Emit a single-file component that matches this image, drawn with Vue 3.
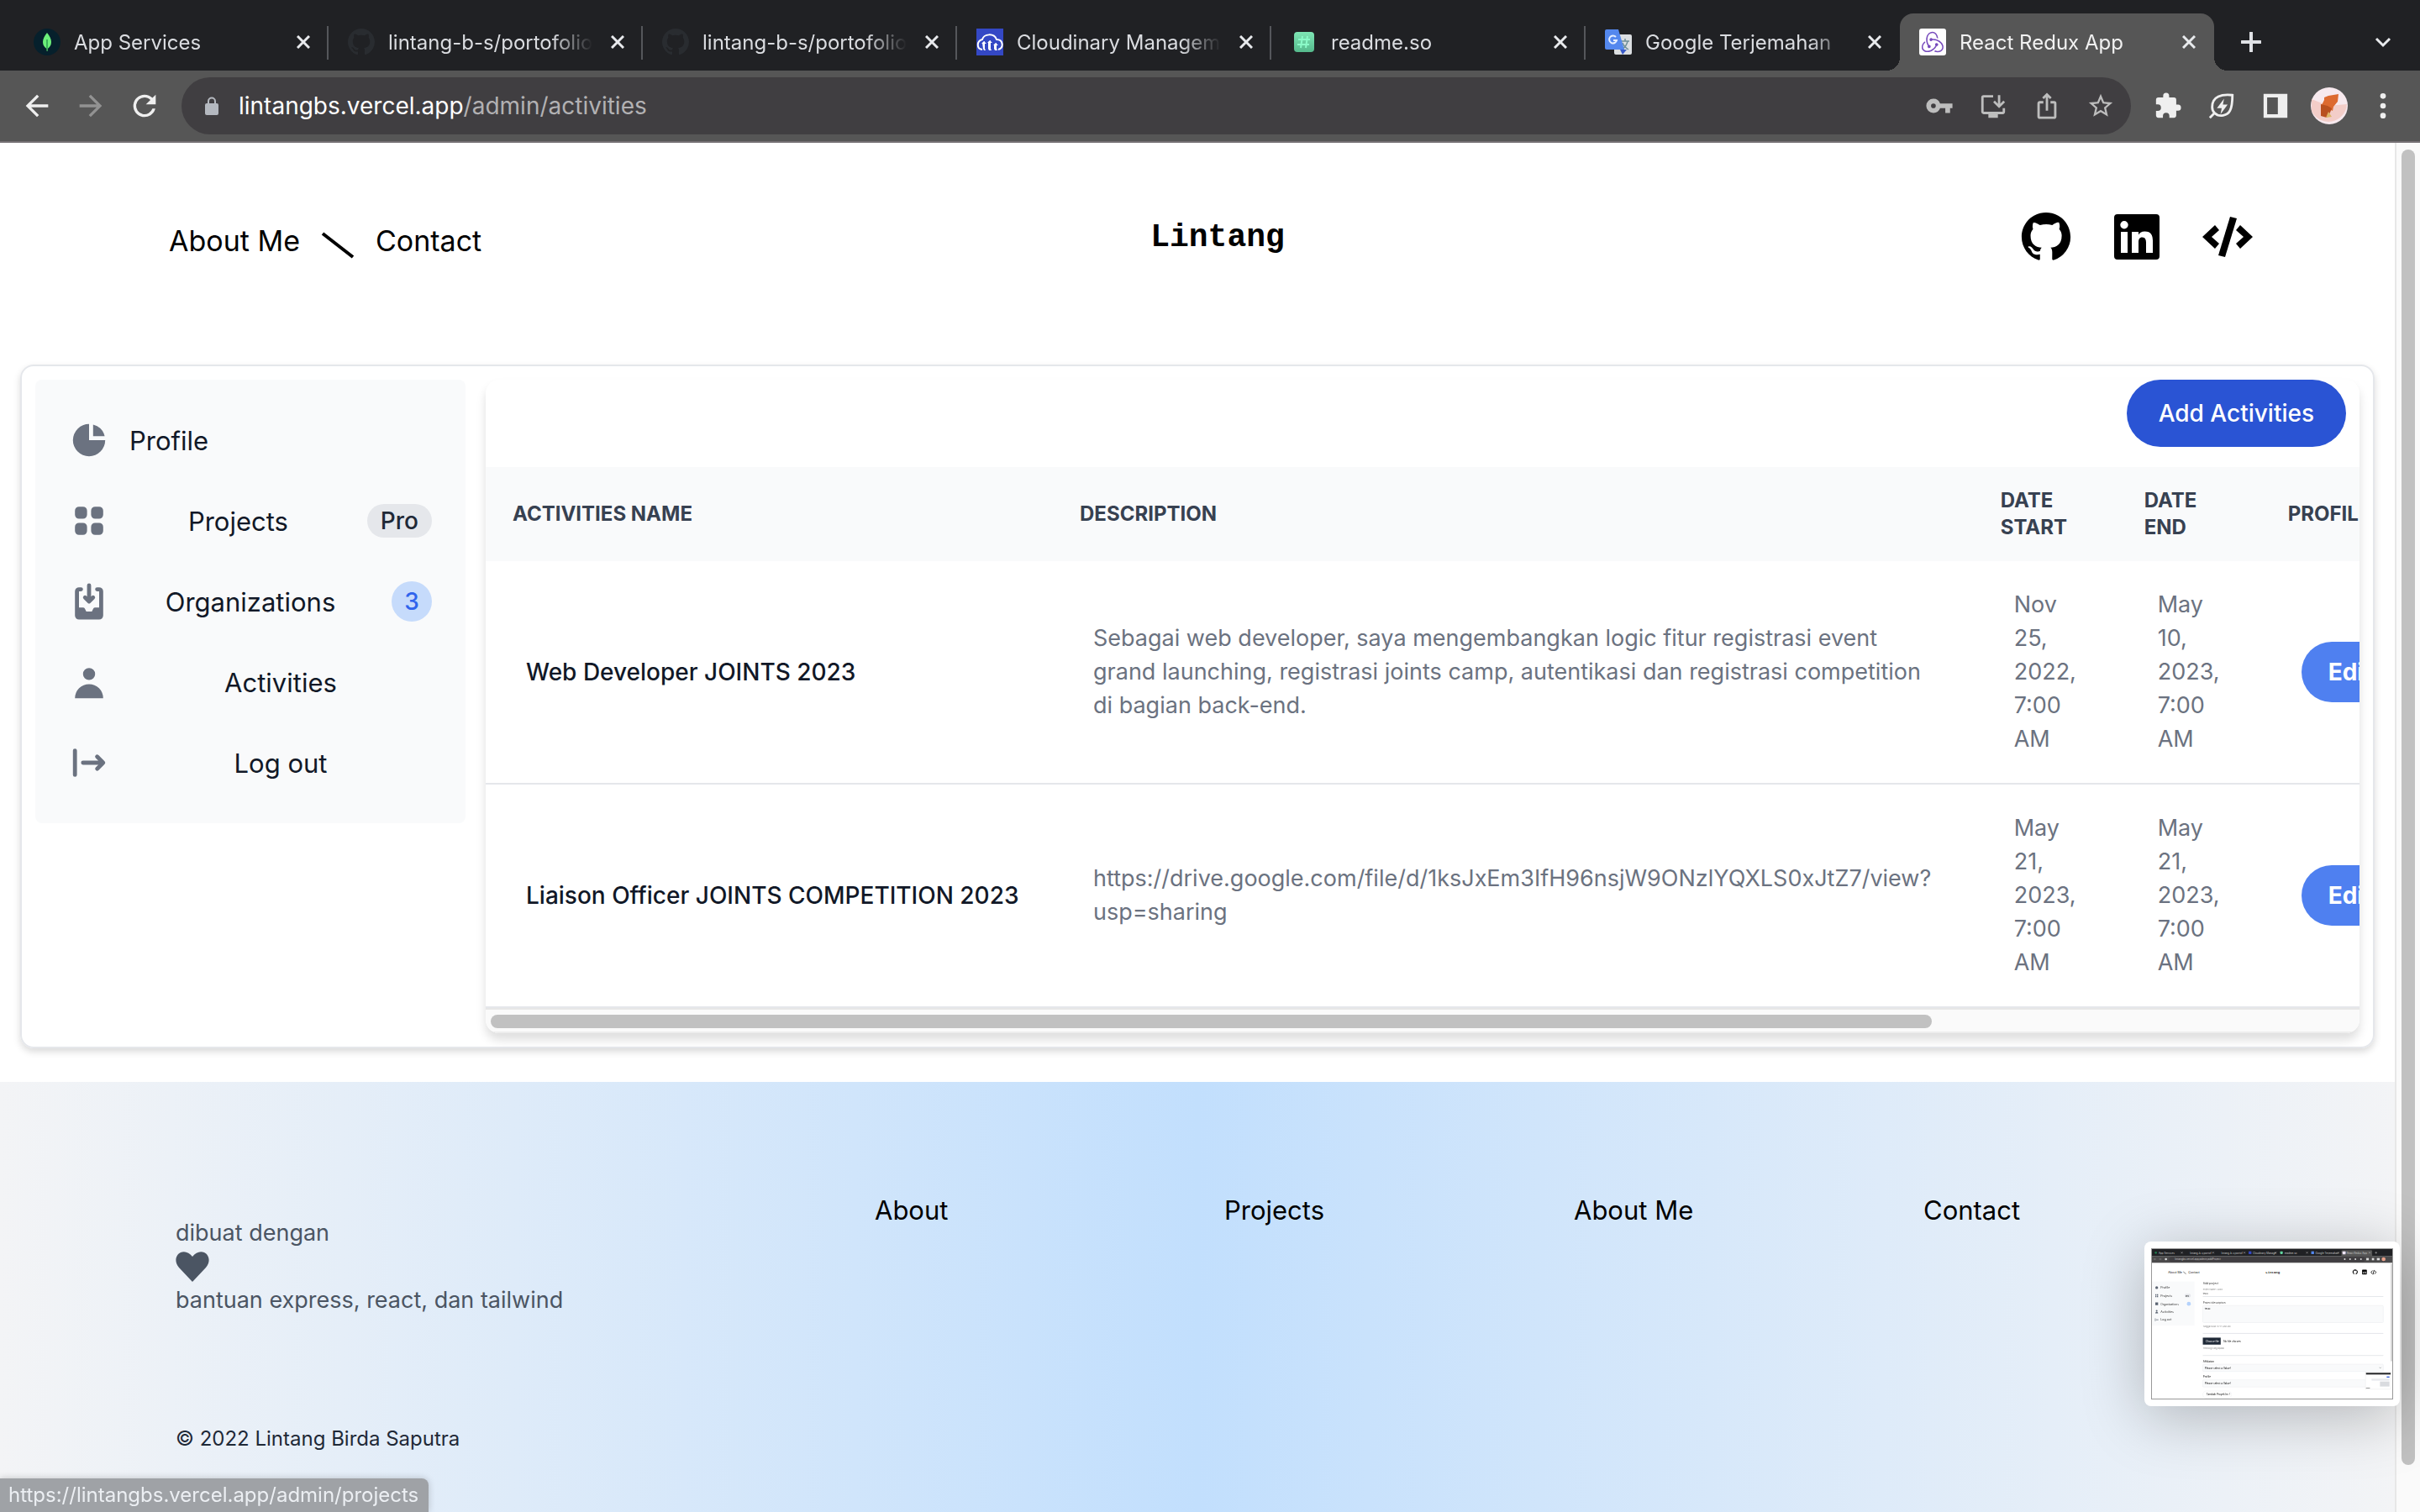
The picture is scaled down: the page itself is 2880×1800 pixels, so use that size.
<script setup>
import { ref } from "vue";

const tabs = [
	{ title: "App Services", icon: "mongo" },
	{ title: "lintang-b-s/portofolio", icon: "github" },
	{ title: "lintang-b-s/portofolio", icon: "github" },
	{ title: "Cloudinary Management", icon: "cloudinary" },
	{ title: "readme.so", icon: "readme" },
	{ title: "Google Terjemahan", icon: "translate" },
	{ title: "React Redux App", icon: "redux", active: true },
];

const path = ref("/admin/activities");

const columns = ["Activities name", "Description", "Date Start", "Date End", "Profile"];

const rows = [
	{
		name: "Web Developer JOINTS 2023",
		description: [
			"Sebagai web developer, saya mengembangkan logic fitur registrasi event",
			"grand launching, registrasi joints camp, autentikasi dan registrasi competition",
			"di bagian back-end.",
		],
		start: ["Nov", "25,", "2022,", "7:00", "AM"],
		end: ["May", "10,", "2023,", "7:00", "AM"],
	},
	{
		name: "Liaison Officer JOINTS COMPETITION 2023",
		description: ["https://drive.google.com/file/d/1ksJxEm3IfH96nsjW9ONzlYQXLS0xJtZ7/view?", "usp=sharing"],
		start: ["May", "21,", "2023,", "7:00", "AM"],
		end: ["May", "21,", "2023,", "7:00", "AM"],
	},
];

const footerLinks = ["About", "Projects", "About Me", "Contact"];

const githubPath =
	"M8 0C3.58 0 0 3.58 0 8c0 3.54 2.29 6.53 5.47 7.59.4.07.55-.17.55-.38 0-.19-.01-.82-.01-1.49-2.01.37-2.53-.49-2.69-.94-.09-.23-.48-.94-.82-1.13-.28-.15-.68-.52-.01-.53.63-.01 1.08.58 1.23.82.72 1.21 1.87.87 2.33.66.07-.52.28-.87.51-1.07-1.78-.2-3.64-.89-3.64-3.95 0-.87.31-1.59.82-2.15-.08-.2-.36-1.02.08-2.12 0 0 .67-.21 2.2.82.64-.18 1.32-.27 2-.27s1.36.09 2 .27c1.53-1.04 2.2-.82 2.2-.82.44 1.1.16 1.92.08 2.12.51.56.82 1.27.82 2.15 0 3.07-1.87 3.75-3.65 3.95.29.25.54.73.54 1.48 0 1.07-.01 1.93-.01 2.2 0 .21.15.46.55.38A8.01 8.01 0 0 0 16 8c0-4.42-3.58-8-8-8z";
</script>

<template>
	<div class="browser">
		<header class="chrome">
			<div class="tab-strip">
				<div v-for="(tab, i) in tabs" :key="i" class="tab" :class="{ active: tab.active, plain: i === 5 }">
					<svg v-if="tab.icon === 'mongo'" class="favicon" viewBox="0 0 32 32">
						<circle cx="16" cy="16" r="16" fill="#06202c" />
						<path d="M16 5c-3 4-5 7-5 11 0 4 2 6 4.500 8l.2 3h.8l.2-3c2.500-2 4.300-4 4.300-8 0-4-2-7-5-11z" fill="#6cf07a" />
						<path d="M16 13v11" stroke="#2b9c50" stroke-width="1.5" />
					</svg>
					<svg v-else-if="tab.icon === 'github'" class="favicon" viewBox="0 0 16 16">
						<path :d="githubPath" fill="#292c30" />
					</svg>
					<svg v-else-if="tab.icon === 'cloudinary'" class="favicon" viewBox="0 0 32 32">
						<rect width="32" height="32" fill="#3448c5" />
						<path d="M7 25c-7-1-7-10 0-12 2-7 14-8 17 0 8 0 9 10 2 12" fill="none" stroke="#fff" stroke-width="2" />
						<path d="M7 17l3-2v9l1 2H9l-1-2zM14 16l3-2v10l1 2h-3l-1-2zM21 19l3-2v7l1 2h-3l-1-2z" fill="#fff" />
						<path d="M6 18l3-3 3 3zM13 17l3-3 3 3zM20 20l3-3 3 3z" fill="#fff" />
					</svg>
					<svg v-else-if="tab.icon === 'readme'" class="favicon" viewBox="0 0 32 32">
						<defs>
							<linearGradient id="readme" x1="0" x2="0" y1="0" y2="1">
								<stop offset="0" stop-color="#7ee6b5" />
								<stop offset="1" stop-color="#55b98c" />
							</linearGradient>
						</defs>
						<rect x="4" y="4" width="24" height="24" rx="4" fill="url(#readme)" />
						<path d="M14 9l-2 14M20 9l-2 14M9 13h14M8 19h14" stroke="#8bfac8" stroke-width="2" />
					</svg>
					<svg v-else-if="tab.icon === 'translate'" class="favicon" viewBox="0 0 32 32">
						<rect x="11" y="7" width="21" height="24" rx="2" fill="#dcdfe2" />
						<path d="M19 15h10M24 12v3M27 15c-1 5-4 8-7 10M21 17c1 4 4 6 7 8" stroke="#6f8f98" stroke-width="1.5" fill="none" />
						<path d="M18 25l8 0-5 6z" fill="#3a5bc8" />
						<path d="M2 1h14l7 24H2a2 2 0 0 1-2-2V3a2 2 0 0 1 2-2z" fill="#5488ee" />
						<path d="M13 10a4.500 4.500 0 1 0 1 4h-4" stroke="#e6efff" stroke-width="2" fill="none" />
					</svg>
					<svg v-else class="favicon" viewBox="0 0 32 32">
						<rect width="32" height="32" rx="3" fill="#fff" />
						<path transform="translate(3 3) scale(1.08)" d="M16.634 16.504c.87-.075 1.543-.84 1.5-1.754-.047-.914-.796-1.648-1.709-1.648h-.061a1.71 1.71 0 00-1.648 1.769c.03.479.226.869.494 1.153-1.048 2.038-2.621 3.535-5.005 4.795-1.603.838-3.296 1.154-4.944.93-1.378-.195-2.456-.81-3.116-1.799-.988-1.499-1.078-3.116-.255-4.734.601-1.166 1.499-2.023 2.099-2.443a9.96 9.96 0 01-.42-1.543C-.868 14.408-.416 18.752.932 20.805c1.004 1.498 3.057 2.456 5.304 2.456.6 0 1.23-.044 1.843-.194 3.897-.749 6.848-3.086 8.541-6.532zm5.348-3.746c-2.32-2.728-5.738-4.226-9.634-4.226h-.51c-.253-.554-.837-.899-1.498-.899h-.045c-.943 0-1.678.81-1.647 1.753.03.898.794 1.648 1.708 1.648h.074a1.69 1.69 0 001.499-1.049h.555c2.309 0 4.495.674 6.488 1.992 1.527 1.005 2.622 2.323 3.237 3.896.538 1.288.509 2.547-.045 3.597-.855 1.647-2.294 2.517-4.196 2.517-1.199 0-2.367-.375-2.967-.644-.36.298-.96.793-1.394 1.093 1.318.598 2.652.943 3.94.943 2.922 0 5.093-1.647 5.918-3.236.898-1.798.824-4.824-1.47-7.416zM6.49 17.042c.029.899.793 1.648 1.708 1.648h.06a1.688 1.688 0 001.648-1.768c0-.9-.779-1.647-1.693-1.647h-.06c-.06 0-.149 0-.226.029-1.243-2.098-1.768-4.347-1.572-6.772.12-1.828.72-3.417 1.797-4.735.899-1.124 2.593-1.68 3.746-1.708 3.236-.061 4.585 3.971 4.689 5.574l1.498.45c-.345-4.914-3.4-7.492-6.322-7.492-2.742 0-5.273 1.993-6.293 4.915-1.393 3.896-.479 7.641 1.229 10.638a1.36 1.36 0 00-.209.868z" fill="#764abc" />
					</svg>
					<span class="tab-title">{{ tab.title }}</span>
					<button class="tab-close" aria-label="Close tab">
						<svg viewBox="0 0 16 16"><path d="M1 1l14 14M15 1L1 15" /></svg>
					</button>
				</div>
				<button class="new-tab" aria-label="New tab">
					<svg viewBox="0 0 24 24"><path d="M12 1v22M1 12h22" /></svg>
				</button>
				<button class="tab-menu" aria-label="Search tabs">
					<svg viewBox="0 0 20 12"><path d="M2 2l8 8 8-8" /></svg>
				</button>
			</div>

			<div class="toolbar">
				<button class="tool" aria-label="Back">
					<svg viewBox="0 0 24 24"><path d="M20 11H7.830l5.590-5.590L12 4l-8 8 8 8 1.410-1.410L7.830 13H20z" /></svg>
				</button>
				<button class="tool dim" aria-label="Forward">
					<svg viewBox="0 0 24 24"><path d="M12 4l-1.410 1.410L16.170 11H4v2h12.170l-5.580 5.590L12 20l8-8z" /></svg>
				</button>
				<button class="tool" aria-label="Reload">
					<svg viewBox="0 0 24 24"><path d="M17.650 6.350A7.960 7.960 0 0 0 12 4a8 8 0 1 0 7.730 10h-2.080A6 6 0 1 1 12 6c1.660 0 3.140.69 4.220 1.780L13 11h7V4z" /></svg>
				</button>
				<div class="omnibox">
					<svg class="lock" viewBox="0 0 16 22">
						<rect y="8" width="16" height="14" rx="2" fill="#b4b8bf" />
						<path d="M4 9V5.500a4 4 0 0 1 8 0V9" fill="none" stroke="#b4b8bf" stroke-width="2" />
					</svg>
					<span class="url">lintangbs.vercel.app<span class="url-path">{{ path }}</span></span>
					<button class="tool soft" aria-label="Passwords">
						<svg viewBox="0 0 24 24"><path d="M12.650 10A6 6 0 0 0 7 6a6 6 0 0 0 0 12 6 6 0 0 0 5.650-4H17v4h4v-4h2v-4zM7 14a2 2 0 1 1 0-4 2 2 0 0 1 0 4z" /></svg>
					</button>
					<button class="tool soft" aria-label="Install">
						<svg viewBox="0 0 24 24"><path d="M20 17H4V5h8V3H4a2 2 0 0 0-2 2v12c0 1.100.9 2 2 2h4v3h8v-3h4a2 2 0 0 0 2-2v-3h-2z" /><path d="M17 14l5-5-1.410-1.410L18 10.170V3h-2v7.170l-2.590-2.580L12 9z" /></svg>
					</button>
					<button class="tool soft" aria-label="Share">
						<svg viewBox="0 0 24 24"><path d="M16 5l-1.420 1.420-1.590-1.590V16h-1.980V4.830L9.420 6.420 8 5l4-4zm4 5v11a2 2 0 0 1-2 2H6a2 2 0 0 1-2-2V10c0-1.110.89-2 2-2h3v2H6v11h12V10h-3V8h3a2 2 0 0 1 2 2z" /></svg>
					</button>
					<button class="tool soft" aria-label="Bookmark">
						<svg viewBox="0 0 24 24"><path d="M22 9.240l-7.190-.62L12 2 9.190 8.630 2 9.240l5.460 4.730L5.820 21 12 17.270 18.180 21l-1.630-7.030zM12 15.400l-3.760 2.270 1-4.280-3.320-2.880 4.380-.38L12 6.100l1.710 4.040 4.380.38-3.320 2.880 1 4.280z" /></svg>
					</button>
				</div>
				<button class="tool ext" aria-label="Extensions">
					<svg viewBox="0 0 24 24"><path d="M20.500 11H19V7a2 2 0 0 0-2-2h-4V3.500a2.500 2.500 0 0 0-5 0V5H4a2 2 0 0 0-2 2v3.800h1.500a2.700 2.700 0 0 1 0 5.400H2V20a2 2 0 0 0 2 2h3.800v-1.500a2.700 2.700 0 0 1 5.400 0V22H17a2 2 0 0 0 2-2v-4h1.500a2.500 2.500 0 0 0 0-5z" /></svg>
				</button>
				<button class="tool ext" aria-label="Energy saver">
					<svg viewBox="0 0 24 24">
						<path d="M21 3c-9-1-17 1-17 10 0 2 1 4 2 5 4 4 11 2 13-2 2-4 2-8 2-13zM6 18l-4 4" fill="none" stroke="#efefef" stroke-width="2" />
						<path d="M14 6l-6 8h4l-1 5 6-8h-4z" />
					</svg>
				</button>
				<button class="tool ext" aria-label="Side panel">
					<svg viewBox="0 0 24 24"><path d="M2 2h20v20H2zM5 5v14h9V5z" fill-rule="evenodd" /></svg>
				</button>
				<button class="tool avatar" aria-label="Account">
					<svg viewBox="0 0 44 44">
						<circle cx="22" cy="22" r="22" fill="#f7e9ee" />
						<path d="M1 14l20 8 22-2a22 22 0 0 1-42 8z" fill="#f3cdc8" />
						<path d="M16 12l5-2 12-2-1 9-5 6-1 5-4-2-9-5 3-6z" fill="#dd6a30" />
						<path d="M12 20l8 2 5 3-2 5-4 6-7-2z" fill="#b9501f" />
						<path d="M21 29l4 6-7 1z" fill="#dcb566" />
					</svg>
				</button>
				<button class="tool" aria-label="Menu">
					<svg viewBox="0 0 24 24"><circle cx="12" cy="5" r="2" /><circle cx="12" cy="12" r="2" /><circle cx="12" cy="19" r="2" /></svg>
				</button>
			</div>
		</header>

		<div class="viewport">
			<div class="page">
				<nav class="site-nav">
					<div class="nav-links">
						<a href="#about">About Me</a>
						<svg class="slash" viewBox="0 0 40 32"><path d="M2 2l36 28" stroke="#000" stroke-width="4" /></svg>
						<a href="#contact">Contact</a>
					</div>
					<a href="#home" class="brand">Lintang</a>
					<div class="social">
						<a href="#github" aria-label="GitHub">
							<svg viewBox="-0.25 -0.25 16.5 16.5"><path :d="githubPath" /></svg>
						</a>
						<a href="#linkedin" aria-label="LinkedIn">
							<svg viewBox="0 0 60 60">
								<path d="M7 3h46a4 4 0 0 1 4 4v46a4 4 0 0 1-4 4H7a4 4 0 0 1-4-4V7a4 4 0 0 1 4-4zM11 24v25h8V24zM15 11a4.700 4.700 0 1 0 0 9.400 4.700 4.700 0 0 0 0-9.400zM24 24v25h8V36.500c0-3.500 1-6 4.500-6s4.500 3 4.500 6V49h8V35c0-7-2-11.600-9.500-11.600-4 0-6.500 2-7.500 4V24z" fill-rule="evenodd" />
							</svg>
						</a>
						<a href="#code" aria-label="Code">
							<svg viewBox="0 0 60 60">
								<path d="M33 6l8 2-14 46-8-2z" />
								<path d="M15 16l5 6-9 8 9 8-5 6L0 30zM45 16l-5 6 9 8-9 8 5 6 15-14z" />
							</svg>
						</a>
					</div>
				</nav>

				<main class="panel">
					<aside class="sidebar">
						<a href="#profile" class="side-item first">
							<svg viewBox="0 0 20 20"><path d="M2 10a8 8 0 018-8v8h8a8 8 0 11-16 0z" /><path d="M12 2.252A8.014 8.014 0 0117.748 8H12V2.252z" /></svg>
							<span>Profile</span>
						</a>
						<button class="side-item">
							<svg viewBox="0 0 20 20"><path d="M5 3a2 2 0 00-2 2v2a2 2 0 002 2h2a2 2 0 002-2V5a2 2 0 00-2-2H5zM5 11a2 2 0 00-2 2v2a2 2 0 002 2h2a2 2 0 002-2v-2a2 2 0 00-2-2H5zM11 5a2 2 0 012-2h2a2 2 0 012 2v2a2 2 0 01-2 2h-2a2 2 0 01-2-2V5zM11 13a2 2 0 012-2h2a2 2 0 012 2v2a2 2 0 01-2 2h-2a2 2 0 01-2-2v-2z" /></svg>
							<span>Projects</span>
							<b class="badge">Pro</b>
						</button>
						<button class="side-item">
							<svg viewBox="0 0 20 20"><path d="M8.707 7.293a1 1 0 00-1.414 1.414l2 2a1 1 0 001.414 0l2-2a1 1 0 00-1.414-1.414l-.293.293V2a1 1 0 10-2 0v5.586l-.293-.293z" /><path d="M5 3a2 2 0 00-2 2v12a2 2 0 002 2h10a2 2 0 002-2V5a2 2 0 00-2-2h-1a1 1 0 100 2h1v8h-2a1 1 0 00-.894.553L11.382 15H8.618l-.724-1.447A1 1 0 007 13H5V5h1a1 1 0 000-2H5z" /></svg>
							<span>Organizations</span>
							<b class="badge count">3</b>
						</button>
						<button class="side-item">
							<svg viewBox="0 0 20 20"><path fill-rule="evenodd" d="M10 9a3 3 0 100-6 3 3 0 000 6zm-7 9a7 7 0 1114 0H3z" /></svg>
							<span>Activities</span>
						</button>
						<button class="side-item">
							<svg viewBox="0 0 20 20"><path d="M3 3a1 1 0 00-1 1v12a1 1 0 102 0V4a1 1 0 00-1-1zm10.293 9.293a1 1 0 001.414 1.414l3-3a1 1 0 000-1.414l-3-3a1 1 0 10-1.414 1.414L14.586 9H7a1 1 0 100 2h7.586l-1.293 1.293z" /></svg>
							<span>Log out</span>
						</button>
					</aside>

					<section class="table-card">
						<div class="table-actions">
							<button class="add-button">Add Activities</button>
						</div>
						<table class="activities">
							<colgroup>
								<col class="col-name" />
								<col />
								<col class="col-date" />
								<col class="col-date" />
								<col class="col-profile" />
							</colgroup>
							<thead>
								<tr>
									<th v-for="col in columns" :key="col">{{ col }}</th>
								</tr>
							</thead>
							<tbody>
								<tr v-for="row in rows" :key="row.name">
									<td class="name">{{ row.name }}</td>
									<td>{{ row.description.join("\n") }}</td>
									<td>{{ row.start.join("\n") }}</td>
									<td>{{ row.end.join("\n") }}</td>
									<td><button class="edit-button">Edit</button></td>
								</tr>
							</tbody>
						</table>
						<div class="h-scroll"><div class="h-thumb"></div></div>
					</section>
				</main>

				<footer class="site-footer">
					<div class="footer-grid">
						<div class="made-with">
							<p>dibuat dengan</p>
							<svg viewBox="0 0 40 36"><path d="M20 36L4 19C-2 12 0 4 6 1c5-2 10 0 14 5 4-5 9-7 14-5 6 3 8 11 2 18z" /></svg>
							<p>bantuan express, react, dan tailwind</p>
						</div>
						<a v-for="link in footerLinks" :key="link" href="#footer">{{ link }}</a>
					</div>
					<p class="copyright">© 2022 Lintang Birda Saputra</p>
				</footer>
			</div>
			<div class="v-scroll"><div class="v-thumb"></div></div>
		</div>

		<div class="status">https://lintangbs.vercel.app/admin/projects</div>

		<div class="preview">
			<svg viewBox="0 0 860 536">
				<rect width="860" height="536" fill="#fff" />
				<rect width="860" height="26" fill="#202124" />
				<rect x="678" y="4" width="110" height="22" rx="4" fill="#565656" />
				<rect y="26" width="860" height="23" fill="#4b4a4b" />
				<rect x="62" y="28" width="700" height="18" rx="9" fill="#403e41" />
				<g font-size="9" fill="#c8c8c8">
					<text x="24" y="17">App Services</text>
					<text x="136" y="17">lintang-b-s/portof</text>
					<text x="248" y="17">lintang-b-s/portof</text>
					<text x="361" y="17">Cloudinary Manage</text>
					<text x="474" y="17">readme.so</text>
					<text x="585" y="17">Google Terjemahan</text>
					<text x="697" y="17">React Redux App</text>
					<text x="82" y="39">lintangbs.vercel.app/admin/addProject</text>
				</g>
				<path d="M104 10l6 6m0-6l-6 6M216 10l6 6m0-6l-6 6M328 10l6 6m0-6l-6 6M440 10l6 6m0-6l-6 6M552 10l6 6m0-6l-6 6M664 10l6 6m0-6l-6 6M776 10l6 6m0-6l-6 6M798 13h8M802 9v8M6 36h8M26 36h8" stroke="#bbb" stroke-width="1.5" />
				<circle cx="14" cy="13" r="4" fill="#1f7a4d" />
				<rect x="346" y="8" width="10" height="10" fill="#3448c5" />
				<rect x="459" y="8" width="9" height="10" rx="2" fill="#62d69f" />
				<rect x="570" y="8" width="10" height="10" fill="#5488ee" />
				<rect x="682" y="8" width="11" height="11" rx="2" fill="#eee5fa" />
				<g fill="#ddd">
					<circle cx="50" cy="36" r="4" />
					<circle cx="690" cy="36" r="3" />
					<circle cx="709" cy="36" r="3" />
					<circle cx="728" cy="36" r="3" />
					<circle cx="748" cy="36" r="3" />
					<rect x="767" y="32" width="9" height="8" />
					<rect x="787" y="32" width="8" height="8" />
					<rect x="805" y="32" width="10" height="8" />
				</g>
				<circle cx="829" cy="36" r="7" fill="#e9a18a" />
				<g font-size="11" fill="#222">
					<text x="58" y="88">About Me</text>
					<text x="130" y="88">Contact</text>
					<text x="407" y="87" font-size="12" font-weight="700" class="mini-brand">Lintang</text>
				</g>
				<path d="M112 81l10 8" stroke="#000" stroke-width="1.5" />
				<g transform="translate(718 73) scale(1.15)"><path :d="githubPath" /></g>
				<rect x="752" y="74" width="17" height="17" rx="2" />
				<path d="M756 81v7M761 88v-7M761 83c3-3 5-1 5 5" stroke="#fff" stroke-width="2" fill="none" />
				<path d="M789 77l-5 6 5 6M797 77l5 6-5 6M795 75l-4 16" stroke="#000" stroke-width="2.5" fill="none" />
				<rect y="116" width="152" height="158" fill="#f9fafb" />
				<g fill="#5b6472">
					<circle cx="17" cy="138" r="5" />
					<path d="M12 162h4v4h-4zM18 162h4v4h-4zM12 168h4v4h-4zM18 168h4v4h-4zM12 191h10v10H12zM12 230c0-7 10-7 10 0z" />
					<circle cx="17" cy="221" r="3" />
					<path d="M11 248h2v10h-2zM15 252h8v2h-8z" />
				</g>
				<g font-size="11" fill="#333">
					<text x="31" y="142">Profile</text>
					<text x="31" y="171">Projects</text>
					<text x="31" y="200" font-size="10">Organizations</text>
					<text x="31" y="229">Activities</text>
					<text x="31" y="257">Log out</text>
				</g>
				<rect x="117" y="160" width="22" height="13" rx="6" fill="#e5e7eb" />
				<text x="120" y="170" font-size="8">Pro</text>
				<circle cx="132" cy="196" r="7" fill="#b5d2fb" />
				<g font-size="10" fill="#333">
					<text x="183" y="127">Add project</text>
					<text x="183" y="147" font-size="7" fill="#888">Project Name / Good</text>
					<text x="183" y="161" font-size="7">texxx</text>
					<text x="183" y="194" font-size="9">Project description</text>
				</g>
				<path d="M182 170h646M182 302h646M182 381h646" stroke="#e5e7eb" stroke-width="3" />
				<rect x="182" y="202" width="646" height="61" rx="3" fill="#f9fafb" stroke="#e2e4e8" />
				<text x="189" y="218" font-size="8">texxx</text>
				<text x="183" y="279" font-size="7" fill="#888">Tanggal Mulai (YYYY-MM-DD)</text>
				<rect x="182" y="317" width="64" height="25" fill="#1f2937" />
				<text x="192" y="333" font-size="9" fill="#fff">Choose file</text>
				<text x="256" y="333" font-size="9">No file chosen</text>
				<text x="183" y="358" font-size="7" fill="#888">Teknologi yang dipakai</text>
				<text x="183" y="405" font-size="9">Affiliation</text>
				<rect x="182" y="412" width="646" height="26" rx="3" fill="#f9fafb" stroke="#e2e4e8" />
				<text x="189" y="429" font-size="9">Please select a Value!</text>
				<path d="M814 423l3 4 3-4" fill="none" stroke="#888" stroke-width="1.5" />
				<text x="183" y="461" font-size="9">Profile</text>
				<rect x="182" y="468" width="646" height="26" rx="3" fill="#f9fafb" stroke="#e2e4e8" />
				<text x="189" y="485" font-size="9">Please select a Value!</text>
				<rect x="182" y="508" width="103" height="26" rx="13" fill="#fff" stroke="#e5e7eb" />
				<text x="195" y="524" font-size="9">Tambah Proyek Ini !</text>
				<rect x="764" y="440" width="92" height="62" fill="#fff" stroke="#e0e0e0" />
				<rect x="766" y="443" width="88" height="6" fill="#202124" />
				<rect x="840" y="456" width="10" height="4" fill="#2f5bd8" />
				<rect x="786" y="464" width="64" height="7" fill="#e8eaee" />
				<rect x="816" y="474" width="34" height="18" fill="#d9dbdf" />
				<rect x="766" y="496" width="14" height="3" fill="#999" />
				<rect x="855" y="52" width="4" height="350" rx="2" fill="#c1c1c1" />
			</svg>
		</div>
	</div>
</template>

<style>
body {
	margin: 0;
}
</style>

<style scoped>
.browser {
	display: flex;
	flex-direction: column;
	min-height: 100vh;
	font-family: Inter, "Liberation Sans", sans-serif;
	color: #111827;
	background-color: #ffffff;
}

* {
	box-sizing: border-box;
}

button {
	border: 0;
	padding: 0;
	background: none;
	font: inherit;
	color: inherit;
	cursor: pointer;
}

a {
	color: inherit;
	text-decoration: none;
}

p {
	margin: 0;
}

svg {
	display: block;
	flex: none;
}

/* browser chrome */
.tab-strip {
	display: flex;
	align-items: flex-end;
	height: 84px;
	padding: 0 28px 0 17px;
	background-color: #202124;
}

.tab {
	display: flex;
	align-items: center;
	flex: 0 1 374px;
	min-width: 0;
	height: 68px;
	padding: 0 14px 0 23px;
	position: relative;
	color: #dadce0;
}

.tab:not(.active):not(.plain)::after {
	content: "";
	position: absolute;
	right: 0;
	top: 15px;
	width: 2px;
	height: 40px;
	background-color: #55575b;
}

.tab.active {
	background-color: #565656;
	border-radius: 16px 16px 0 0;
	color: #f1f1f1;
}

/* flared feet of the selected tab */
.tab.active::before,
.tab.active::after {
	content: "";
	position: absolute;
	bottom: 0;
	width: 16px;
	height: 16px;
}

.tab.active::before {
	left: -16px;
	background: radial-gradient(circle at 0 0, transparent 16px, #565656 16px);
}

.tab.active::after {
	right: -16px;
	background: radial-gradient(circle at 100% 0, transparent 16px, #565656 16px);
}

.favicon {
	width: 32px;
	height: 32px;
}

.tab-title {
	flex: 1;
	min-width: 0;
	margin: 0 14px 0 16px;
	overflow: hidden;
	white-space: nowrap;
	font-size: 24px;
	mask-image: linear-gradient(to right, #000 calc(100% - 48px), transparent);
}

.tab-close {
	padding: 8px;
}

.tab-close svg {
	width: 16px;
	height: 16px;
	stroke: #e8eaed;
	stroke-width: 3;
}

.new-tab {
	margin: 0 auto 22px 32px;
}

.new-tab svg {
	width: 24px;
	height: 24px;
	stroke: #dfe1e5;
	stroke-width: 4;
	stroke-linecap: round;
}

.tab-menu {
	padding: 0 6px;
	margin-bottom: 26px;
}

.tab-menu svg {
	width: 20px;
	height: 16px;
	fill: none;
	stroke: #e8eaed;
	stroke-width: 3;
}

.toolbar {
	display: flex;
	align-items: center;
	height: 86px;
	gap: 24px;
	padding: 0 24px;
	background-color: #565656;
	border-bottom: 2px solid #757074;
}

.tool svg {
	width: 40px;
	height: 40px;
	fill: #efefef;
}

.tool {
	display: flex;
	justify-content: center;
	width: 40px;
}

.tool.dim svg {
	fill: #929292;
}

.tool.soft svg {
	width: 34px;
	height: 34px;
	fill: #bdbdbd;
}

.tool.ext svg {
	width: 34px;
	height: 34px;
}

.tool.avatar svg {
	width: 44px;
	height: 44px;
}

.omnibox {
	display: flex;
	align-items: center;
	flex: 1;
	min-width: 0;
	gap: 24px;
	height: 68px;
	padding: 0 16px 0 28px;
	border-radius: 34px;
	background-color: #403e41;
}

.lock {
	width: 16px;
	height: 24px;
}

.url {
	flex: 1;
	font-size: 28px;
	color: #ffffff;
}

.url-path {
	color: #b2b1b3;
}

/* page */
.viewport {
	display: flex;
	flex: 1;
}

.page {
	display: flex;
	flex-direction: column;
	flex: 1;
	min-width: 0;
}

.site-nav {
	display: grid;
	grid-template-columns: 1fr auto 1fr;
	align-items: center;
	height: 224px;
	padding: 0 169px 0 201px;
	color: #000000;
}

.nav-links {
	display: flex;
	align-items: center;
	gap: 25px;
	padding-top: 8px;
	font-size: 34px;
}

.slash {
	width: 40px;
	height: 32px;
	margin-top: 12px;
}

.brand {
	padding-left: 16px;
	font-family: "Liberation Mono", monospace;
	font-size: 38px;
	font-weight: 700;
}

.social {
	display: flex;
	justify-content: flex-end;
	gap: 48px;
}

.social svg {
	width: 60px;
	height: 60px;
}

.panel {
	display: flex;
	align-items: flex-start;
	gap: 24px;
	margin: 40px 24px 40px;
	padding: 16px;
	border: 2px solid #e5e7eb;
	border-radius: 16px;
	box-shadow: 0 4px 8px rgba(0, 0, 0, 0.15);
}

.sidebar {
	display: flex;
	flex-direction: column;
	flex: none;
	gap: 16px;
	width: 512px;
	padding: 32px 24px;
	border-radius: 8px;
	background-color: #f9fafb;
}

.side-item {
	display: flex;
	align-items: center;
	gap: 24px;
	height: 80px;
	padding: 0 16px;
	font-size: 31px;
	text-align: center;
}

.side-item svg {
	width: 48px;
	height: 48px;
	fill: #6b7280;
}

.side-item span {
	flex: 1;
}

.side-item.first span {
	flex: none;
}

.badge {
	height: 40px;
	padding: 0 16px;
	border-radius: 20px;
	background-color: #e5e7eb;
	color: #1f2937;
	font-size: 28px;
	font-weight: 500;
	line-height: 40px;
}

.badge.count {
	width: 48px;
	height: 48px;
	padding: 0;
	border-radius: 24px;
	background-color: #c6dbfb;
	color: #2f64ec;
	line-height: 48px;
}

.table-card {
	flex: 1;
	min-width: 0;
	overflow: hidden;
	border-radius: 16px;
	box-shadow: 0 8px 12px rgba(0, 0, 0, 0.13);
}

.table-actions {
	display: flex;
	justify-content: flex-end;
	padding: 0 16px 24px;
}

.add-button {
	height: 80px;
	padding: 0 38px;
	border-radius: 40px;
	background-color: #2a54d4;
	color: #ffffff;
	font-size: 28px;
	font-weight: 500;
}

.activities {
	width: 129%;
	table-layout: fixed;
	border-collapse: separate;
	border-spacing: 0;
	text-align: left;
	font-size: 27px;
	line-height: 40px;
	color: #6b7280;
}

.col-name {
	width: 675px;
}

.col-date {
	width: 171px;
}

.col-profile {
	width: 764px;
}

.activities th {
	padding: 24px 32px;
	background-color: #f9fafb;
	color: #374151;
	font-size: 24px;
	font-weight: 700;
	line-height: 32px;
	text-transform: uppercase;
}

.activities td {
	padding: 32px 48px;
	border-bottom: 2px solid #e5e7eb;
	white-space: pre;
}

.activities .name {
	color: #111827;
	font-size: 28px;
	font-weight: 500;
}

.edit-button {
	height: 72px;
	padding: 0 32px;
	border-radius: 36px;
	background-color: #4f80f0;
	color: #ffffff;
	font-size: 28px;
	font-weight: 700;
}

.h-scroll {
	height: 30px;
	padding: 6px;
	border-top: 2px solid #e7e7e7;
	border-bottom: 2px solid #ededed;
	background-color: #fafafa;
}

.h-thumb {
	width: 77.3%;
	height: 16px;
	border-radius: 8px;
	background-color: #c1c1c1;
}

.site-footer {
	flex: 1;
	padding: 128px 145px 0 209px;
	background: linear-gradient(to right, #f3f4f6, #c2dffd, #f3f4f6);
}

.footer-grid {
	display: grid;
	grid-template-columns: 2fr repeat(4, 1fr);
	font-size: 31px;
	line-height: 50px;
	color: #000000;
}

.made-with {
	padding-top: 32px;
	font-size: 27px;
	line-height: 40px;
	color: #4b5563;
}

.made-with svg {
	width: 40px;
	height: 40px;
	fill: #4b5563;
}

.copyright {
	margin-top: 128px;
	font-size: 24px;
	line-height: 34px;
	color: #1f2937;
}

.v-scroll {
	flex: none;
	width: 30px;
	padding: 8px 6px;
	border-left: 2px solid #e7e7e7;
	background-color: #fafafa;
}

.v-thumb {
	width: 16px;
	height: 97%;
	border-radius: 8px;
	background-color: #c1c1c1;
}

/* link target bubble */
.status {
	position: fixed;
	left: 0;
	bottom: 0;
	padding: 0 12px 0 10px;
	border-radius: 0 8px 0 0;
	background-color: #9fa2a6;
	box-shadow: 0 0 8px rgba(0, 0, 0, 0.2);
	color: #eceff3;
	font-size: 24px;
	line-height: 40px;
}

/* floating screen capture */
.preview {
	position: fixed;
	right: 24px;
	bottom: 126px;
	width: 304px;
	padding: 8px;
	border-radius: 8px;
	background-color: #ffffff;
	box-shadow: 0 12px 72px rgba(0, 0, 0, 0.25);
}

.preview svg {
	width: 100%;
	border: 1px solid #999999;
}

.mini-brand {
	font-family: "Liberation Mono", monospace;
}
</style>
